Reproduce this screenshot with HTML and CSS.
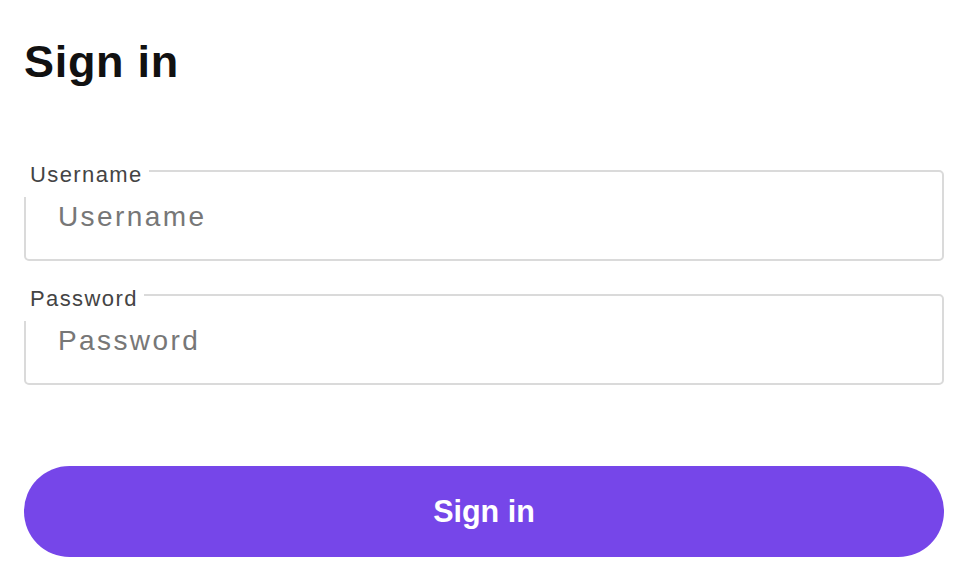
FILE: index.html
```html
<!DOCTYPE html>
<html lang="en">
<head>
  <meta charset="UTF-8" />
  <meta name="viewport" content="width=device-width, initial-scale=1.0" />
  <title>Sign in</title>
  <link rel="stylesheet" href="styles.css">
</head>
<body>

  <main class="signin">
    <h1>Sign in</h1>

    <form class="signin-form">
      <div class="field">
        <label class="field-label" for="username">Username</label>
        <input class="field-input" type="text" id="username" placeholder="Username" />
      </div>

      <div class="field">
        <label class="field-label" for="password">Password</label>
        <input class="field-input" type="password" id="password" placeholder="Password" />
      </div>

      <button class="btn-primary" type="submit">Sign in</button>
    </form>
  </main>

</body>
</html>
```

FILE: styles.css
```css
body {
  font-family: "Liberation Sans", Arial, sans-serif;
  margin: 0;
  padding: 0;
  background: #fff;
  color: #111;
}
.signin {
  padding: 0 22px 0 24px;
}
.signin h1 {
  margin: 36px 0 0;
  font-size: 45px;
  line-height: 52px;
  font-weight: bold;
  letter-spacing: 0.7px;
  color: #111;
}
.signin-form {
  margin-top: 82px;
  display: flex;
  flex-direction: column;
}
.field {
  position: relative;
  margin-bottom: 33px;
}
/* label sits over the top-left corner of the box, hiding that bit of border */
.field-label {
  position: absolute;
  top: -15px;
  left: -2px;
  padding: 0 6px 2px 8px;
  line-height: 40px;
  font-size: 22px;
  letter-spacing: 1.4px;
  color: #444;
  background: #fff;
}
.field-input {
  display: block;
  box-sizing: border-box;
  width: 100%;
  height: 91px;
  margin: 0;
  padding: 2px 0 0 32px;
  border: 2px solid #dadada;
  border-radius: 5px;
  font-family: inherit;
  font-size: 28px;
  letter-spacing: 2.4px;
  color: #222;
  outline: none;
}
.field-input::placeholder {
  color: #777;
}
.btn-primary {
  margin-top: 48px;
  height: 91px;
  border: none;
  border-radius: 46px;
  background-color: #7646e9;
  color: #fff;
  font-family: inherit;
  font-size: 30.5px;
  font-weight: bold;
  cursor: pointer;
}
.btn-primary:hover {
  background-color: #6a3bdc;
}
```
